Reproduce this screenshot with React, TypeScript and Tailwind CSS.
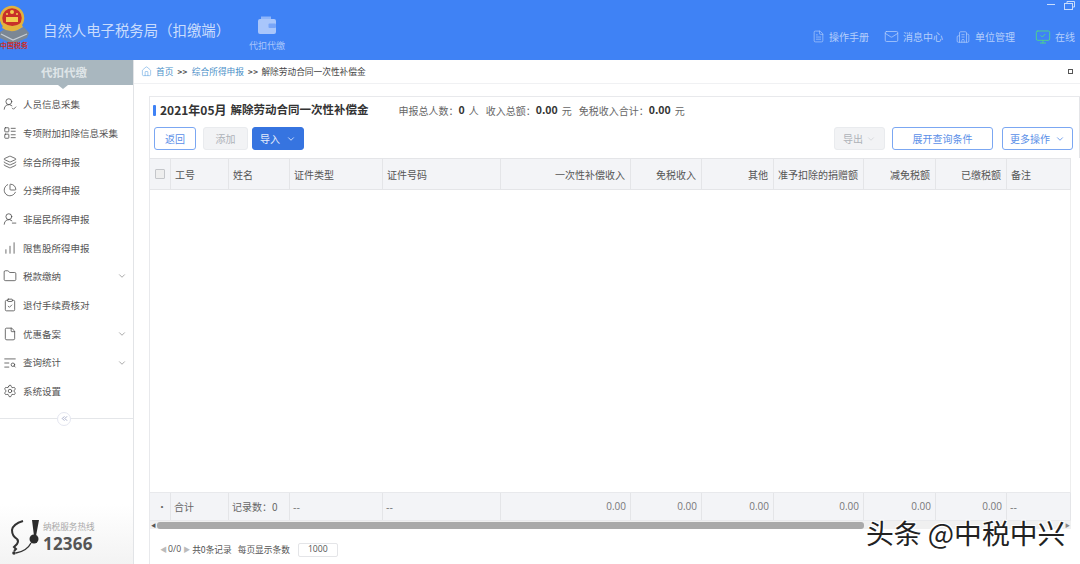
import React from "react";
import { House, FileText, Mail, Building2, MonitorCheck, ChevronDown, ChevronsLeft, LayoutList, Layers, ChartPie, ChartNoAxesColumnIncreasing, Folder, ClipboardCheck, File, TextSearch, Settings, UserRoundCheck, UserRoundMinus } from "lucide-react";

const menu: [React.ComponentType<any>, string, boolean][] = [
  [UserRoundCheck, "人员信息采集", false],
  [LayoutList, "专项附加扣除信息采集", false],
  [Layers, "综合所得申报", false],
  [ChartPie, "分类所得申报", false],
  [UserRoundMinus, "非居民所得申报", false],
  [ChartNoAxesColumnIncreasing, "限售股所得申报", false],
  [Folder, "税款缴纳", true],
  [ClipboardCheck, "退付手续费核对", false],
  [File, "优惠备案", true],
  [TextSearch, "查询统计", true],
  [Settings, "系统设置", false],
];

const cols = "grid grid-cols-[21px_58px_61px_93px_118px_130px_71px_72px_90px_72px_71px_64px]";
const heads: [string, boolean][] = [["工号", false], ["姓名", false], ["证件类型", false], ["证件号码", false], ["一次性补偿收入", true], ["免税收入", true], ["其他", true], ["准予扣除的捐赠额", true], ["减免税额", true], ["已缴税额", true], ["备注", false]];
const foots: [string, boolean][] = [["合计", false], ["记录数：0", false], ["--", false], ["--", false], ["0.00", true], ["0.00", true], ["0.00", true], ["0.00", true], ["0.00", true], ["0.00", true], ["--", false]];

function Emblem() {
  return (
    <svg width="30" height="42" viewBox="0 0 30 42" className="shrink-0">
      <path d="M0 30 L8 25 Q14 32 24 25 L29 31 L27 36 L13 42 L0 36 Z" fill="#7b8794" />
      <path d="M1 32 L13 38 L27 32" fill="none" stroke="#c7ced6" strokeWidth="1.2" />
      <circle cx="12" cy="16" r="11" fill="#c8302a" stroke="#e3b23c" strokeWidth="2.5" />
      <circle cx="12" cy="10" r="2" fill="#f2cc4d" />
      <circle cx="7" cy="12" r="1" fill="#f2cc4d" />
      <circle cx="17" cy="12" r="1" fill="#f2cc4d" />
      <rect x="6" y="15" width="12" height="5" fill="#f2cc4d" />
      <path d="M2 26 Q12 33 23 25 L21 21 Q12 27 4 21 Z" fill="#e3b23c" />
    </svg>
  );
}

function Wallet() {
  return (
    <svg width="20" height="20" viewBox="0 0 20 20">
      <path d="M4 1.5 H14 V5 H4 Z" fill="#8fb5f9" />
      <rect x="1" y="4" width="18" height="15" rx="2" fill="#a9c6fb" />
      <rect x="11.5" y="8.5" width="7.5" height="4.5" rx="1" fill="#78a5f8" />
    </svg>
  );
}

function Agent() {
  return (
    <svg width="30" height="38" viewBox="0 0 30 38" fill="none" className="shrink-0">
      <path d="M12 3 Q2 6 1 12 Q1 18 6 21 Q8 23 6 26 L3 29 L5 31 L3 33" stroke="#333" strokeWidth="2" />
      <path d="M21 2 H28 L25 18 H23 Z" fill="#2b2b2b" />
      <circle cx="23" cy="21" r="4.5" fill="#2b2b2b" />
      <path d="M20 25 Q16 33 5 35" stroke="#333" strokeWidth="1.3" />
      <circle cx="3" cy="35" r="1.8" fill="#333" />
    </svg>
  );
}

function Btn({ children, kind, className }: { children: React.ReactNode; kind: "line" | "off" | "fill"; className: string }) {
  const k = kind === "line" ? "bg-white border-[#7ba7f2] text-[#5b8fe8]" : kind === "off" ? "bg-[#f2f3f5] border-[#e9ebee] text-[#aeb2b8]" : "bg-[#3674e0] border-[#3674e0] text-[#e6eefc]";
  return <div className={`h-[23px] border rounded-[3px] flex items-center justify-center text-[10px] ${k} ${className}`}>{children}</div>;
}

export default function App() {
  return (
    <div className="w-[1080px] h-[564px] overflow-hidden relative flex flex-col bg-white text-[#555] font-['Noto_Sans_CJK_SC','Noto_Sans',sans-serif]">
      <header className="h-[60px] shrink-0 bg-[#3f82f5] flex relative">
        <div className="w-[43px] pt-[2px] relative shrink-0">
          <Emblem />
          <span className="absolute left-0 top-[41px] text-[7px] leading-[9px] text-[#c8302a] font-bold whitespace-nowrap">中国税务</span>
        </div>
        <div className="w-[205px] pt-[20px] text-[14.4px] leading-[20px] text-[#c9dcfc] whitespace-nowrap">自然人电子税务局（扣缴端）</div>
        <div className="flex flex-col items-center w-[38px] pt-[15px] text-[9px] leading-[12px] text-[#a9c6fb]">
          <Wallet />
          <span className="mt-[5px] whitespace-nowrap">代扣代缴</span>
        </div>
        <div className="ml-auto flex flex-col items-end w-[280px]">
          <div className="h-[28px] flex items-start pt-[1px] pr-[5px] gap-[9px]">
            <div className="w-[8px] h-px bg-[#c9dcfc] mt-[3px]" />
            <svg width="11" height="9" viewBox="0 0 11 9" fill="none" stroke="#c9dcfc" strokeWidth="1">
              <rect x="0.5" y="2.5" width="8" height="6" />
              <path d="M3 2.5 V0.5 H10.5 V6 H8.5" />
            </svg>
          </div>
          <div className="flex items-center h-[17px] text-[10px] text-[#b5cffb] pr-[5px] whitespace-nowrap">
            <FileText size={13} strokeWidth={1.2} />
            <span className="ml-[4px]">操作手册</span>
            <Mail size={15} strokeWidth={1.2} className="ml-[15px]" />
            <span className="ml-[4px]">消息中心</span>
            <Building2 size={14} strokeWidth={1.2} className="ml-[13px]" />
            <span className="ml-[5px]">单位管理</span>
            <MonitorCheck size={16} strokeWidth={1.4} className="ml-[20px] text-[#4fd58a]" />
            <span className="ml-[4px]">在线</span>
          </div>
        </div>
      </header>
      <div className="flex-1 flex min-h-0">
        <aside className="w-[134px] shrink-0 border-r border-[#e2e4e7] flex flex-col relative">
          <div className="h-[25px] bg-[#a9b7bf] text-[#dfe5e8] text-[11.5px] font-bold flex items-center justify-center pr-[5px]">代扣代缴</div>
          <div className="absolute left-[58px] top-[25px] border-x-[5px] border-x-transparent border-t-[4px] border-t-[#a9b7bf]" />
          <nav className="pt-[5px]">
            {menu.map(([Icon, label, arrow]) => (
              <div key={label} className="h-[28.7px] flex items-center pl-[3px] pr-[6px] text-[9.5px] text-[#555]">
                <Icon size={14} strokeWidth={1.3} className="text-[#444] shrink-0" />
                <span className="ml-[6px] whitespace-nowrap">{label}</span>
                {arrow && <ChevronDown size={10} className="ml-auto text-[#999]" />}
              </div>
            ))}
          </nav>
          <div className="mt-[12px] border-t border-[#e4e6e9] relative">
            <div className="absolute left-[57px] -top-[7px] w-[14px] h-[14px] rounded-full bg-white border border-[#e4e6f0] flex items-center justify-center text-[#8b93b8]">
              <ChevronsLeft size={9} />
            </div>
          </div>
          <div className="mt-auto h-[60px] pl-[11px] pb-[8px] flex items-end bg-gradient-to-b from-white to-[#f3f3f3]">
            <Agent />
            <div className="ml-[2px] mb-[1px] flex flex-col">
              <span className="text-[8.6px] leading-[11px] text-[#aaa] whitespace-nowrap">纳税服务热线</span>
              <span className="text-[17px] leading-[23px] font-bold text-[#555] font-['Open_Sans',sans-serif] tracking-[0.2px]">12366</span>
            </div>
          </div>
        </aside>
        <main className="flex-1 min-w-0 flex flex-col">
          <div className="h-[24px] shrink-0 border-b border-[#f0f1f3] flex items-center pl-[7px] pr-[7px] text-[8.7px] whitespace-nowrap">
            <House size={11} strokeWidth={1.2} className="text-[#5aa0e0]" />
            <span className="ml-[4px] text-[#4a90c8]">首页</span>
            <span className="mx-[4px] text-[#555] text-[8px] font-bold tracking-[0.5px]">&gt;&gt;</span>
            <span className="text-[#4a90c8]">综合所得申报</span>
            <span className="ml-[4px] mr-[3px] text-[#555] text-[8px] font-bold tracking-[0.5px]">&gt;&gt;</span>
            <span className="text-[#444]">解除劳动合同一次性补偿金</span>
            <div className="ml-auto w-[5px] h-[5px] border-[1.5px] border-[#555]" />
          </div>
          <section className="flex-1 min-h-0 mt-[12px] ml-[15px] border-t border-l border-[#e8e9ec] flex flex-col">
            <div className="shrink-0 border-r border-[#e4e5e8] pb-[8px]">
              <div className="h-[26px] pl-[3px] flex items-center whitespace-nowrap">
                <div className="w-[3px] h-[11px] bg-[#3f82f5] rounded-[1px]" />
                <span className="ml-[4px] text-[12px] font-bold text-[#333]">2021年05月</span>
                <span className="ml-[4px] text-[11.5px] font-bold text-[#333]">解除劳动合同一次性补偿金</span>
                <div className="ml-[30px] text-[10px] text-[#666] flex items-center">
                  <span>申报总人数：</span><b className="text-[10.5px] text-[#333]">0</b><span className="ml-[4px]">人</span>
                  <span className="ml-[7px]">收入总额：</span><b className="text-[10.5px] text-[#333]">0.00</b><span className="ml-[4px]">元</span>
                  <span className="ml-[7px]">免税收入合计：</span><b className="text-[10.5px] text-[#333]">0.00</b><span className="ml-[4px]">元</span>
                </div>
              </div>
              <div className="h-[23px] mt-[4px] pl-[4px] pr-[6px] flex items-center">
                <Btn kind="line" className="w-[42px]">返回</Btn>
                <Btn kind="off" className="ml-[7px] w-[45px]">添加</Btn>
                <Btn kind="fill" className="ml-[4px] w-[52px] gap-[6px]">导入<ChevronDown size={10} /></Btn>
                <Btn kind="off" className="ml-auto w-[51px] gap-[3px]">导出<ChevronDown size={10} className="text-[#d4d6da]" /></Btn>
                <Btn kind="line" className="ml-[7px] w-[101px]">展开查询条件</Btn>
                <Btn kind="line" className="ml-[9px] w-[71px] gap-[5px]">更多操作<ChevronDown size={10} /></Btn>
              </div>
            </div>
            <div className="flex-1 min-h-0 flex flex-col mr-[9px]">
              <div className={`${cols} h-[32px] shrink-0 bg-[#f3f4f7] border-y border-[#e4e5e8] text-[10px] text-[#555]`}>
                <div className="flex items-center justify-center border-r border-[#e4e5e8]">
                  <div className="w-[10px] h-[10px] bg-[#eee] border border-[#c4c6ca] rounded-[1px]" />
                </div>
                {heads.map(([t, r]) => (
                  <div key={t} className={`flex items-center pl-[4px] pr-[5px] whitespace-nowrap overflow-hidden border-r border-[#e4e5e8] ${r ? "justify-end" : ""}`}>{t}</div>
                ))}
              </div>
              <div className="flex-1 min-h-0 border-r border-[#eee]" />
              <div className={`${cols} h-[29px] shrink-0 bg-[#f3f4f7] border-y border-[#e8e9ec] text-[10px] text-[#666]`}>
                <div className="flex items-center justify-end pr-[3px] border-r border-[#e4e5e8]">·</div>
                {foots.map(([t, r], i) => (
                  <div key={i} className={`flex items-center pl-[3px] pr-[4px] whitespace-nowrap border-r border-[#e4e5e8] ${r ? "justify-end text-[#777] font-['Open_Sans',sans-serif]" : ""}`}>{t}</div>
                ))}
              </div>
            </div>
            <div className="h-[8px] shrink-0 bg-[#f0f0f0] flex items-center mr-[9px]">
              <div className="w-[7px] text-center text-[5px] leading-[8px] text-[#555]">◀</div>
              <div className="w-[707px] h-[7px] bg-[#a9a9a9] rounded-[3px]" />
              <div className="ml-auto w-[7px] text-center text-[5px] leading-[8px] text-[#888]">▶</div>
            </div>
            <div className="h-[35px] shrink-0 flex items-center pt-[6px] pl-[10px] text-[8.7px] text-[#555] whitespace-nowrap">
              <span className="text-[7px] text-[#bbb]">◀</span>
              <span className="ml-[1px] font-['Open_Sans',sans-serif]">0/0</span>
              <span className="ml-[2px] text-[7px] text-[#bbb]">▶</span>
              <span className="ml-[2px]">共0条记录</span>
              <span className="ml-[6px]">每页显示条数</span>
              <div className="ml-[8px] w-[40px] h-[14px] border border-[#e4e5e8] rounded-[2px] flex items-center justify-center font-['Open_Sans',sans-serif]">1000</div>
            </div>
          </section>
        </main>
      </div>
      <div className="absolute left-[866px] top-[514px] text-[27.8px] leading-[36px] text-[#222] whitespace-nowrap [text-shadow:1px_1px_0_#fff,-1px_-1px_0_#fff,1px_-1px_0_#fff,-1px_1px_0_#fff]">头条 @中税中兴</div>
    </div>
  );
}
